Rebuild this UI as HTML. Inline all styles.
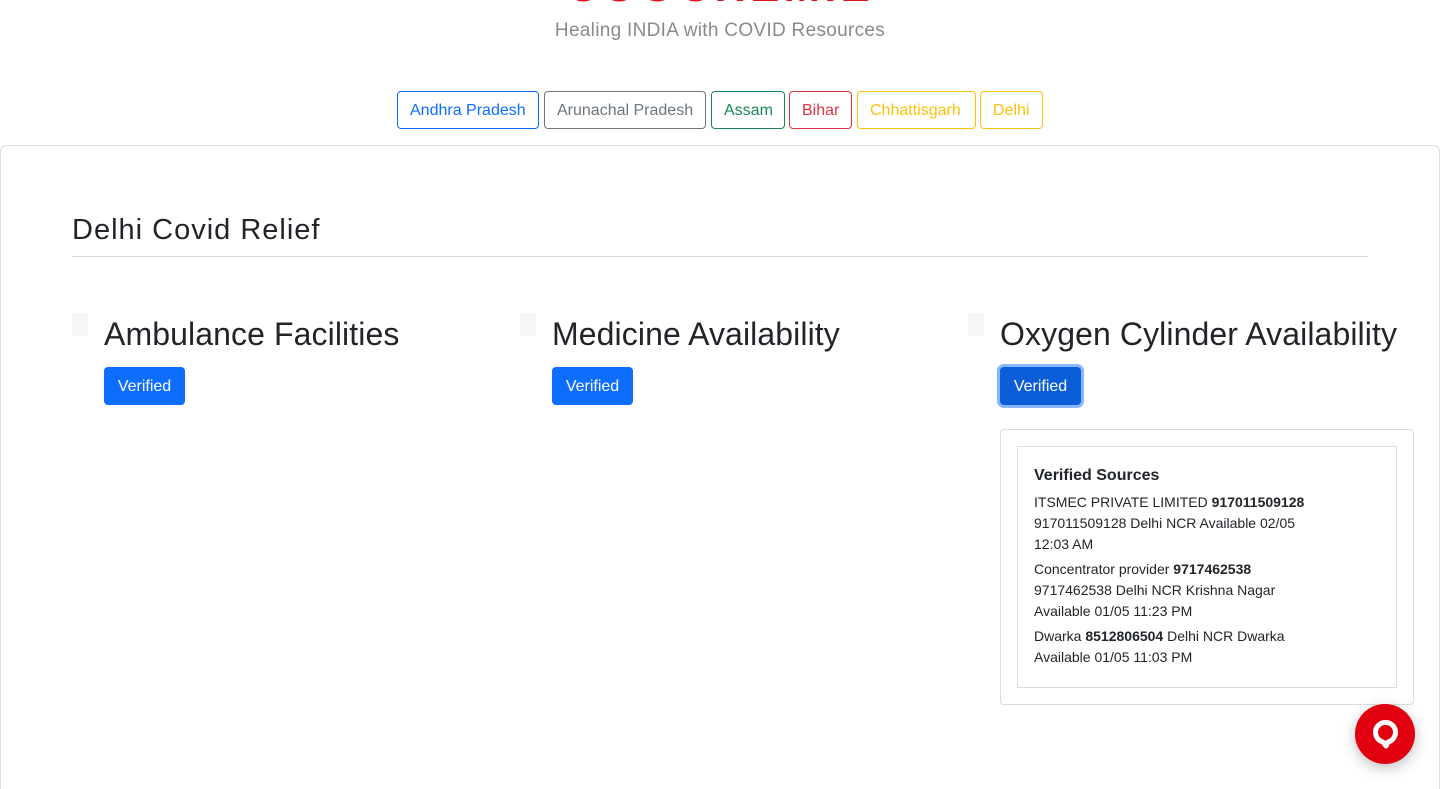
<!DOCTYPE html>
<html style="overflow:hidden;height:789px"><head><meta charset="utf-8"><style>
*{box-sizing:border-box;margin:0;padding:0}
body{width:1440px;height:789px;overflow:hidden;background:#fff;font-family:"Liberation Sans",Arial,sans-serif;color:#212529;position:relative}
.a{position:absolute}
.st{position:absolute;top:91px;height:38px;border:1px solid;border-radius:4px;font-size:16px;line-height:38px;padding:0 12px;white-space:nowrap}
.sq{position:absolute;top:313px;width:16px;height:23px;background:#f5f6f8}
h2{position:absolute;top:315px;font-size:32px;font-weight:normal;line-height:38px;white-space:nowrap;letter-spacing:0.1px}
.btn{position:absolute;top:367px;width:81px;height:38px;background:#0d6efd;color:#fff;border-radius:4px;font-size:16px;line-height:39px;text-align:center}
.src{font-size:14px;line-height:21px;margin-top:4px}
</style></head><body>
<div class="a" style="left:560px;top:-30px;width:320px;height:34px;overflow:hidden;text-align:center;color:#e0141e;font-size:44px;font-weight:bold;line-height:34px;letter-spacing:4px">COOCHEMIE</div>
<div class="a" style="left:0;width:1440px;top:20px;text-align:center;font-size:19px;color:#8a8a8a;letter-spacing:0.3px">Healing INDIA with COVID Resources</div>

<div class="st" style="left:397px;width:142px;color:#0d6efd;border-color:#0d6efd">Andhra Pradesh</div>
<div class="st" style="left:544px;width:162px;color:#6c757d;border-color:#6c757d">Arunachal Pradesh</div>
<div class="st" style="left:711px;width:74px;color:#198754;border-color:#198754">Assam</div>
<div class="st" style="left:789px;width:63px;color:#dc3545;border-color:#dc3545">Bihar</div>
<div class="st" style="left:857px;width:119px;color:#ffc107;border-color:#ffc107">Chhattisgarh</div>
<div class="st" style="left:980px;width:63px;color:#ffc107;border-color:#ffc107">Delhi</div>

<div class="a" style="left:0;top:145px;width:1440px;height:660px;border:1px solid #dcdcdc;border-radius:6px"></div>
<div class="a" style="left:72px;top:212px;font-size:29px;line-height:36px;letter-spacing:1px">Delhi Covid Relief</div>
<div class="a" style="left:72px;top:256px;width:1296px;height:1px;background:#dcdcdc"></div>

<div class="sq" style="left:72px"></div><h2 style="left:104px">Ambulance Facilities</h2><div class="btn" style="left:104px">Verified</div>
<div class="sq" style="left:520px"></div><h2 style="left:552px">Medicine Availability</h2><div class="btn" style="left:552px">Verified</div>
<div class="sq" style="left:968px"></div><h2 style="left:1000px">Oxygen Cylinder Availability</h2>
<div class="btn" style="left:1000px;background:#0b5ed7;box-shadow:0 0 0 3px #86b7fe">Verified</div>

<div class="a" style="left:1000px;top:429px;width:414px;height:276px;border:1px solid #dcdcdc;border-radius:4px"></div>
<div class="a" style="left:1017px;top:446px;width:380px;height:242px;border:1px solid #dcdcdc"></div>
<div class="a" style="left:1034px;top:464px;width:290px">
<div style="font-size:16px;font-weight:bold;line-height:24px">Verified Sources</div>
<div class="src">ITSMEC PRIVATE LIMITED <b>917011509128</b> 917011509128 Delhi NCR Available 02/05 12:03 AM</div>
<div class="src">Concentrator provider <b>9717462538</b> 9717462538 Delhi NCR Krishna Nagar Available 01/05 11:23 PM</div>
<div class="src">Dwarka <b>8512806504</b> Delhi NCR Dwarka Available 01/05 11:03 PM</div>
</div>

<div class="a" style="left:1355px;top:704px;width:60px;height:60px;border-radius:50%;background:#e00010;box-shadow:0 4px 14px rgba(0,0,0,.25)">
<svg width="60" height="60" viewBox="0 0 60 60"><path d="M31 42 L28 38 A10 10 0 1 1 33 38 Z" fill="none" stroke="#fff" stroke-width="5" stroke-linejoin="round"/></svg>
</div>
</body></html>
